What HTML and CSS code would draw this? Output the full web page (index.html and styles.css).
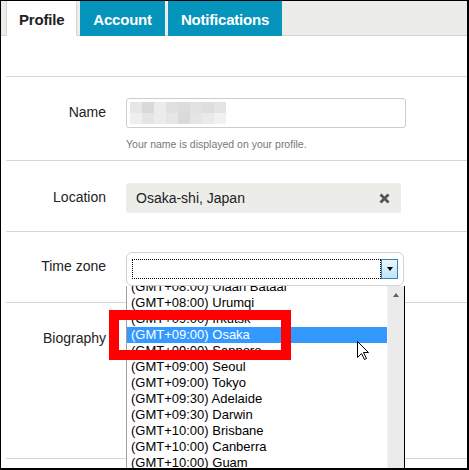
FILE: index.html
```html
<!DOCTYPE html>
<html lang="en">
<head>
    <meta charset="UTF-8">
    <meta name="viewport" content="width=device-width, initial-scale=1.0">
    <title>Profile settings</title>
    <link rel="stylesheet" href="styles.css">
</head>
<body>
    <div class="page">
        <div class="tabs">
            <div class="tab tab-active">Profile</div>
            <div class="tab">Account</div>
            <div class="tab">Notifications</div>
        </div>

        <div class="form">
            <div class="row row-name">
                <div class="label">Name</div>
                <div class="field">
                    <div class="input name-input"><span class="blur"></span></div>
                    <p class="help">Your name is displayed on your profile.</p>
                </div>
            </div>

            <div class="row row-location">
                <div class="label">Location</div>
                <div class="field">
                    <div class="location">
                        <span>Osaka-shi, Japan</span>
                        <svg class="clear" width="11" height="11" viewBox="0 0 11 11">
                            <path d="M1.5 1.5 L9.5 9.5 M9.5 1.5 L1.5 9.5" stroke="#555" stroke-width="2.8" />
                        </svg>
                    </div>
                </div>
            </div>

            <div class="row row-timezone">
                <div class="label">Time zone</div>
                <div class="field">
                    <div class="select-wrap">
                        <div class="select">
                            <div class="select-value"></div>
                            <div class="select-btn"><span class="arrow-down"></span></div>
                        </div>
                        <div class="dropdown">
                            <div class="options">
                                <div class="options-inner">
                                    <div class="option">(GMT+08:00) Ulaan Bataar</div>
                                    <div class="option">(GMT+08:00) Urumqi</div>
                                    <div class="option">(GMT+09:00) Irkutsk</div>
                                    <div class="option option-selected">(GMT+09:00) Osaka</div>
                                    <div class="option">(GMT+09:00) Sapporo</div>
                                    <div class="option">(GMT+09:00) Seoul</div>
                                    <div class="option">(GMT+09:00) Tokyo</div>
                                    <div class="option">(GMT+09:30) Adelaide</div>
                                    <div class="option">(GMT+09:30) Darwin</div>
                                    <div class="option">(GMT+10:00) Brisbane</div>
                                    <div class="option">(GMT+10:00) Canberra</div>
                                    <div class="option">(GMT+10:00) Guam</div>
                                    <div class="option">(GMT+10:00) Hobart</div>
                                </div>
                            </div>
                            <div class="scrollbar"><span class="arrow-up"></span></div>
                        </div>
                    </div>
                </div>
            </div>

            <div class="row row-bio">
                <div class="label">Biography</div>
                <div class="field"></div>
            </div>
        </div>

        <!-- annotation + mouse pointer drawn over the screenshot -->
        <div class="mark"></div>
        <svg class="cursor" width="13" height="20" viewBox="0 0 13 20">
            <path d="M0.5 0.5 L0.5 16.5 L4.5 12.5 L7.5 18.5 L9.5 17.5 L6.5 11.5 L11.5 11.5 Z" fill="#fff" stroke="#000" stroke-width="1" stroke-linejoin="miter" />
        </svg>
    </div>
</body>
</html>
```

FILE: styles.css
```css
body {
    margin: 0;
    font-family: 'Liberation Sans', Arial, sans-serif;
    background: #fff;
    color: #222;
}
.page {
    position: relative;
    width: 469px;
    height: 470px;
    box-sizing: border-box;
    border: 1px solid #000;
    border-right-width: 2px;
    border-bottom-width: 2px;
    overflow: hidden;
    background: #fff;
}

/* tabs */
.tabs {
    display: flex;
    gap: 3px;
    height: 34px;
    padding-left: 5px;
    background: #ecede8;
    border-bottom: 1px solid #d3d3cf;
}
.tab {
    height: 35px;
    box-sizing: border-box;
    margin-bottom: -1px;
    padding: 3px 12px 0;
    border: 1px solid #0594bb;
    border-top: 0;
    background: #0594bb;
    color: #fff;
    font-size: 15px;
    font-weight: bold;
    letter-spacing: -0.2px;
    line-height: 31px;
}
.tab-active {
    background: #fff;
    color: #222;
    border-color: #d3d3cf;
    border-bottom-color: #fff;
}

/* form rows */
.form {
    margin: 40px 0 0 5px;
    border-top: 1px solid #d6d6d1;
}
.row {
    display: flex;
    gap: 20px;
    border-bottom: 1px solid #d6d6d1;
}
.row-name {
    padding: 21px 0 9px;
}
.row-location {
    padding: 22px 0 18px;
}
.row-timezone {
    padding: 20px 0 16px;
}
.row-bio {
    padding-top: 21px;
    height: 134px;
}
.label {
    width: 100px;
    padding-top: 5px;
    text-align: right;
    font-size: 14px;
    line-height: 18px;
    color: #222;
}
.field {
    flex: 1;
}

.input {
    width: 280px;
    height: 30px;
    box-sizing: border-box;
    padding: 3px;
    border: 1px solid #cdcdcd;
    border-radius: 3px;
}
.blur {
    display: block;
    width: 96px;
    height: 22px;
    background:
        linear-gradient(90deg, #e7e7e7 0 12px, #d9d9d9 12px 24px, #ececec 24px 36px, #e0e0e0 36px 48px, #dcdcdc 48px 60px, #e2e2e2 60px 72px, #dedede 72px 84px, #e4e4e4 84px) top / 100% 11px no-repeat,
        linear-gradient(90deg, #efefef 0 12px, #e5e5e5 12px 24px, #ececec 24px 36px, #e6e6e6 36px 48px, #dadada 48px 60px, #e5e5e5 60px 72px, #eaeaea 72px 84px, #f1f1f1 84px) bottom / 100% 11px no-repeat;
}
.help {
    margin: 9px 0 0;
    font-size: 10.5px;
    line-height: 14px;
    color: #777;
}

.location {
    display: flex;
    align-items: center;
    justify-content: space-between;
    width: 275px;
    height: 30px;
    box-sizing: border-box;
    padding: 0 11px 0 10px;
    background: #ecede9;
    border-radius: 3px;
    font-size: 14px;
    color: #222;
}
.clear {
    display: block;
}

/* time zone select, open */
.select-wrap {
    position: relative;
    width: 278px;
    box-sizing: border-box;
    padding: 6px 5px;
    border: 1px solid #d2d2d2;
    border-radius: 6px;
    background: #fff;
}
.select {
    display: flex;
    height: 20px;
}
.select-value {
    flex: 1;
    border: 1px dotted #000;
}
.select-btn {
    width: 17px;
    box-sizing: border-box;
    border: 1px solid #3c7fb1;
    background: linear-gradient(#eaf6fd, #bfe4f9);
    display: flex;
    align-items: center;
    justify-content: center;
}
.arrow-down {
    width: 0;
    height: 0;
    border-top: 4px solid #000;
    border-left: 3.5px solid transparent;
    border-right: 3.5px solid transparent;
}
.dropdown {
    position: absolute;
    top: 33px;
    left: -1px;
    width: 279px;
    height: 200px;
    box-sizing: border-box;
    display: flex;
    background: #fff;
    border-left: 1px solid #a0a0a0;
    border-right: 1px solid #000;
}
.options {
    flex: 1;
    overflow: hidden;
}
.options-inner {
    margin-top: -7px;
}
.option {
    height: 16px;
    padding-left: 4px;
    font-size: 13px;
    line-height: 16px;
    color: #000;
    white-space: nowrap;
}
.option-selected {
    background: #3399ff;
    color: #fff;
}
.scrollbar {
    width: 17px;
    background: #ebebeb;
    border-left: 1px solid #f3f3f3;
    box-sizing: border-box;
    display: flex;
    justify-content: center;
    padding-top: 7px;
}
.arrow-up {
    width: 0;
    height: 0;
    border-bottom: 4px solid #606060;
    border-left: 3.5px solid transparent;
    border-right: 3.5px solid transparent;
}

.mark {
    position: absolute;
    left: 108px;
    top: 309px;
    width: 182px;
    height: 50px;
    box-sizing: border-box;
    border: 10px solid #ff0000;
}
.cursor {
    position: absolute;
    left: 356px;
    top: 340px;
}
```
